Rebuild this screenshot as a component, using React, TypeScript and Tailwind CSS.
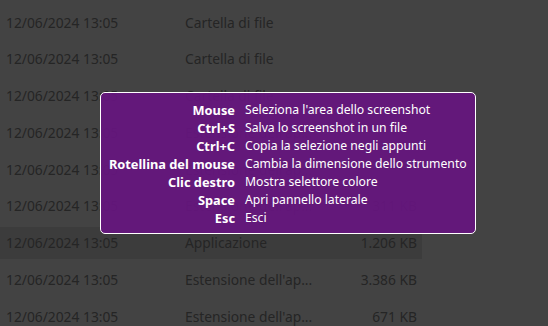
const rows = [
  { type: 'Cartella di file', size: '' },
  { type: 'Cartella di file', size: '' },
  { type: 'Cartella di file', size: '' },
  { type: 'Estensione dell\'ap...', size: '' },
  { type: 'Estensione dell\'ap...', size: '' },
  { type: 'Estensione dell\'ap...', size: '311 KB' },
  { type: 'Applicazione', size: '1.206 KB', selected: true },
  { type: 'Estensione dell\'ap...', size: '3.386 KB' },
  { type: 'Estensione dell\'ap...', size: '671 KB' },
]

const shortcuts = [
  ['Mouse', "Seleziona l'area dello screenshot"],
  ['Ctrl+S', 'Salva lo screenshot in un file'],
  ['Ctrl+C', 'Copia la selezione negli appunti'],
  ['Rotellina del mouse', 'Cambia la dimensione dello strumento'],
  ['Clic destro', 'Mostra selettore colore'],
  ['Space', 'Apri pannello laterale'],
  ['Esc', 'Esci'],
]

export default function App() {
  return (
    <div className="relative h-[326px] w-[548px] overflow-hidden bg-[#434343] font-['Noto_Sans',sans-serif]">
      <div className="pt-[4.5px]">
        {rows.map((row, i) => (
          <div className="flex h-[36.75px] items-center" key={i}>
            <div
              className={`flex h-[32px] w-[422px] items-center text-[13.8px] text-[#252525] ${row.selected ? 'bg-[#3c3c3c]' : ''}`}
            >
              <span className="w-[185px] pl-[6px]">12/06/2024 13:05</span>
              <span className="flex-1">{row.type}</span>
              <span className="pr-[5px]">{row.size}</span>
            </div>
          </div>
        ))}
      </div>

      <div className="absolute left-[100px] top-[92px] w-[376px] rounded-[5px] border border-white bg-[#66167f]/[0.93] pt-[8px] pb-[6px] text-white">
        {shortcuts.map(([key, desc]) => (
          <div className="flex h-[18px] items-center" key={key}>
            <span className="w-[134px] text-right text-[12.8px] leading-[18px] font-bold">{key}</span>
            <span className="pl-[10px] text-[12.2px] leading-[18px]">{desc}</span>
          </div>
        ))}
      </div>
    </div>
  )
}
